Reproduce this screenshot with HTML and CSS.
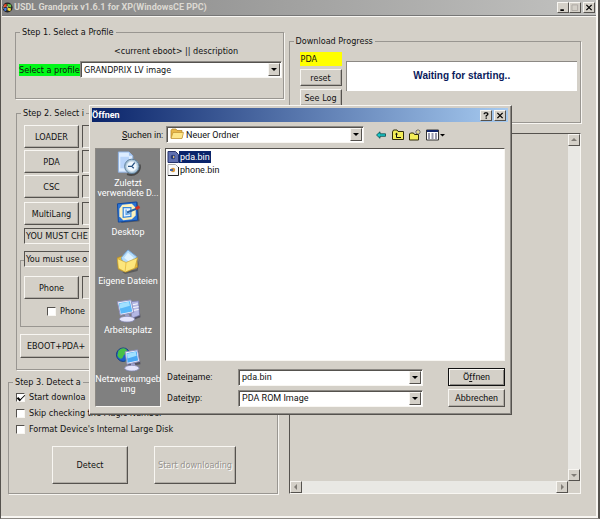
FILE: index.html
```html
<!DOCTYPE html>
<html lang="de">
<head>
<meta charset="utf-8">
<title>USDL Grandprix v1.6.1</title>
<link rel="stylesheet" href="styles.css">
</head>
<body>
<div class="window">
  <header class="titlebar titlebar-inactive">
    <svg class="app-icon" viewBox="0 0 12 12" aria-hidden="true">
      <circle cx="6" cy="6" r="5.5" fill="#222"/>
      <path d="M2 3l3-1v3l-3 1z" fill="#e84a2a"/><path d="M6 2l4 1v3l-4-1z" fill="#6cc04a"/>
      <path d="M2 7l3-1v3l-2 1z" fill="#4a7ce8"/><path d="M6 6l4 1-1 3-3-1z" fill="#f4d83a"/>
      <path d="M1 4l1 1M1 6l1 1M5 5h1v1" stroke="#fff" stroke-width=".8" fill="none"/>
    </svg>
    <h1 class="title">USDL Grandprix v1.6.1 for XP(WindowsCE PPC)</h1>
    <div class="caption-buttons">
      <button class="cap" aria-label="Minimize"><svg viewBox="0 0 8 8"><path d="M1 6h4v2H1z" fill="#000"/></svg></button>
      <button class="cap cap-gap" aria-label="Maximize" disabled><svg viewBox="0 0 8 8"><path d="M.5 1h6.500v6.500H.5z" fill="none" stroke="#aaa6a0"/></svg></button>
      <button class="cap" aria-label="Close"><svg viewBox="0 0 8 8"><path d="M1 1l6 6M7 1L1 7" stroke="#000" stroke-width="1.500"/></svg></button>
    </div>
  </header>

  <main class="content">
    <div class="left">
      <fieldset class="group profile">
        <legend>Step 1. Select a Profile</legend>
        <p class="hint">&lt;current eboot&gt; || description</p>
        <div class="profile-row">
          <label class="green" for="profile">Select a profile</label>
          <span class="combo profile-combo"><select id="profile"><option>GRANDPRIX LV image</option></select><span class="drop"></span></span>
        </div>
      </fieldset>

      <fieldset class="group images">
        <legend>Step 2. Select i</legend>
        <div class="file-row"><button class="btn">LOADER</button><input class="path" aria-label="LOADER"></div>
        <div class="file-row"><button class="btn">PDA</button><input class="path" aria-label="PDA"></div>
        <div class="file-row"><button class="btn">CSC</button><input class="path" aria-label="CSC"></div>
        <div class="file-row lang-row"><button class="btn">MultiLang</button><input class="path" aria-label="MultiLang"></div>
        <p class="note">YOU MUST CHE</p>
        <div class="phone-group">
          <p class="note note-over">You must use o</p>
          <div class="file-row phone-row"><button class="btn">Phone</button><input class="path" aria-label="Phone"></div>
          <label class="check phone-check"><input type="checkbox">Phone</label>
        </div>
        <button class="btn all-btn">EBOOT+PDA+</button>
      </fieldset>

      <fieldset class="group detect">
        <legend>Step 3. Detect a</legend>
        <label class="check"><input type="checkbox" checked>Start downloa</label>
        <label class="check"><input type="checkbox">Skip checking the Magic Number</label>
        <label class="check"><input type="checkbox">Format Device's Internal Large Disk</label>
        <div class="actions">
          <button class="btn big">Detect</button>
          <button class="btn big wide" disabled>Start downloading</button>
        </div>
      </fieldset>
    </div>

    <div class="right">
      <fieldset class="group progress">
        <legend>Download Progress</legend>
        <div class="progress-row">
          <div class="progress-side">
            <span class="yellow">PDA</span>
            <button class="btn small">reset</button>
            <button class="btn small">See Log</button>
          </div>
          <output class="status">Waiting for starting..</output>
        </div>
      </fieldset>
      <section class="log" aria-label="Log">
        <div class="log-text"></div>
        <div class="bar bar-v">
          <button class="scroll" aria-label="Up"><svg viewBox="0 0 8 8"><path d="M1 5l3-3 3 3z" fill="#807c76"/></svg></button>
          <button class="scroll" aria-label="Down"><svg viewBox="0 0 8 8"><path d="M1 3l3 3 3-3z" fill="#807c76"/></svg></button>
        </div>
        <div class="bar bar-h">
          <button class="scroll" aria-label="Left"><svg viewBox="0 0 8 8"><path d="M5 1L2 4l3 3z" fill="#807c76"/></svg></button>
          <button class="scroll" aria-label="Right"><svg viewBox="0 0 8 8"><path d="M3 1l3 3-3 3z" fill="#807c76"/></svg></button>
        </div>
      </section>
    </div>
  </main>

  <section class="dialog" role="dialog" aria-labelledby="dlg-title">
    <header class="titlebar titlebar-active">
      <h2 class="title" id="dlg-title">Öffnen</h2>
      <div class="caption-buttons">
        <button class="cap cap-gap" aria-label="Help"><svg viewBox="0 0 8 8"><path d="M2 2.500V1.700L3 .9h2l1 .9v1.300L4.200 4.300v1" fill="none" stroke="#000" stroke-width="1.400"/><path d="M3.500 6.300h1.500v1.400H3.500z"/></svg></button>
        <button class="cap" aria-label="Close"><svg viewBox="0 0 8 8"><path d="M1 1l6 6M7 1L1 7" stroke="#000" stroke-width="1.500"/></svg></button>
      </div>
    </header>
    <div class="lookin">
      <label for="folder"><u>S</u>uchen in:</label>
      <span class="combo folder-combo">
        <svg class="folder" viewBox="0 0 14 12" aria-hidden="true"><path d="M1 2.500L2 1h4l1 1.500h5V10H1z" fill="#e8b84a" stroke="#b08020" stroke-width=".7"/><path d="M1 10.500L3 4.500h10.500L12 10.500z" fill="#fde68a" stroke="#c09030" stroke-width=".7"/></svg>
        <select id="folder"><option>Neuer Ordner</option></select><span class="drop"></span>
      </span>
      <div class="tools">
        <button class="tool" aria-label="Back"><svg viewBox="0 0 12 12"><path d="M1.500 6L5 2.800v2h5.500v2.500H5v2z" fill="#18c8c8" stroke="#064848" stroke-width=".8"/></svg></button>
        <button class="tool" aria-label="Up one level"><svg viewBox="0 0 12 12"><path d="M.5 3V10.500h11V2.500H6L5 1H1.500z" fill="#f4ee58" stroke="#302c08"/><path d="M3 5.500l1.500-2 1.500 2z" fill="#111"/><path d="M4.500 5v3.500H9" fill="none" stroke="#111"/></svg></button>
        <button class="tool" aria-label="New folder"><svg viewBox="0 0 12 12"><path d="M.5 5v6h9V5.500H5.500L4.500 4h-3z" fill="#f4ee58" stroke="#302c08"/><path d="M9 0v6M6 3h6M7 1l4 4M11 1L7 5" stroke="#3c3828" stroke-width=".6"/><circle cx="9" cy="3" r="1.100" fill="#fff8a0"/></svg></button>
        <button class="tool tool-wide" aria-label="View"><svg viewBox="0 0 19 12"><path d="M.5 1h12v10H.5z" fill="#fff" stroke="#333"/><path d="M1 1h11v2H1z" fill="#10246c"/><path d="M2 5h2M5.500 5h2M9 5h2M2 7h2M5.500 7h2M9 7h2M2 9h2M5.500 9h2M9 9h2" stroke="#34345c" stroke-width="1.200"/><path d="M14 5h5l-2.500 2.500z" fill="#000"/></svg></button>
      </div>
    </div>
    <div class="dialog-body">
      <nav class="places">
        <a href="#" class="place">
          <svg viewBox="0 0 26 26"><path d="M3 1h11l4 4v17H3z" fill="#dcecff" stroke="#8fb2e4"/><path d="M14 1v4h4z" fill="#a4c4f0"/><path d="M5 6h9v12H5z" fill="#b8d4fa"/><path d="M12 24c8 3 15-3 13-10" stroke="#484848" stroke-width="2" fill="none"/><circle cx="17" cy="16" r="7.500" fill="#a8c4d8" stroke="#5c7c98"/><circle cx="17" cy="16" r="5.300" fill="#f0f8fe" stroke="#d0e0ec"/><path d="M17 16l3-4M17 16h-4M17 16l2 2" stroke="#245080" stroke-width="1.300"/></svg>
          <span>Zuletzt<br>verwendete D...</span></a>
        <a href="#" class="place">
          <svg viewBox="0 0 26 26"><path d="M4 4l19-2 2 20-19 2z" fill="#303c50" opacity=".6"/><path d="M2 4l20-2 1 19-20 2z" fill="#2c74d4" stroke="#1048a0"/><path d="M7 5l10-1 4 4v8l-4 4-9 1-4-4V9z" fill="#fff2bc"/><path d="M8 8h8v9l-8 1z" fill="#e4f2ff" stroke="#3888dc" stroke-width="1.300"/><path d="M11 10v5l5-1" fill="none" stroke="#5ca4e8" stroke-width="1.300"/><path d="M12 13l10-4" stroke="#2860a0" stroke-width="2"/><path d="M21 9l4-2" stroke="#d03020" stroke-width="3"/></svg>
          <span>Desktop</span></a>
        <a href="#" class="place">
          <svg viewBox="0 0 26 26"><path d="M7 24l15-3 3-11-2 13-13 3z" fill="#444" opacity=".6"/><path d="M2 9l6-2 14 3 1 9-12 5-8-3z" fill="#e4b83c" stroke="#b48a20" stroke-width=".7"/><path d="M6 9l7-8 9 7-5 9-8 1z" fill="#b4dcfa" stroke="#74a8dc"/><path d="M9 9l4-5 6 5-4 5z" fill="#e0f4ff"/><path d="M2 10l9 4 12-5-3 11-10 4-7-4z" fill="#fce67c" stroke="#c8a030" stroke-width=".7"/><path d="M11 14l-1 9" stroke="#e8c048"/></svg>
          <span>Eigene Dateien</span></a>
        <a href="#" class="place">
          <svg viewBox="0 0 26 26"><path d="M16 4l8-1 2 17-8 3z" fill="#34344c" opacity=".6"/><path d="M15 4l9-1 1 15-8 3z" fill="#b4b8e4" stroke="#7c80b4" stroke-width=".7"/><path d="M18 7l5-1M18 10l6-1M18 13l6-1" stroke="#fff"/><path d="M2 4l14-2 3 13-14 3z" fill="#f0f0fc" stroke="#8c90bc"/><path d="M3.500 5.500l11.500-2 2.500 10.500-12 2.500z" fill="#58b8f8"/><path d="M4 6l10-2 1 4L5 11z" fill="#a0e0ff"/><path d="M10 17h4l1 3h-5z" fill="#a0a4d0"/><ellipse cx="12" cy="22" rx="8" ry="3" fill="#e4e4fa" stroke="#8084b0" stroke-width=".8"/></svg>
          <span>Arbeitsplatz</span></a>
        <a href="#" class="place">
          <svg viewBox="0 0 26 26"><circle cx="8" cy="8" r="7" fill="#2060c8" stroke="#143c80"/><path d="M3 4c4-4 8-3 9 0s-3 3-4 6-4 3-6-1z" fill="#48c048"/><path d="M12 12c3 0 2 3-2 3z" fill="#58cc50"/><path d="M11 6l13-2 2 14-13 2z" fill="#34344c" opacity=".6"/><path d="M10 5l13-2 2 12-13 3z" fill="#f0f0fc" stroke="#8c90bc"/><path d="M11.500 6.500l10.500-2 1.500 9.500-11 2.500z" fill="#48a8f4"/><path d="M12 7l9-2 1 4-9.500 3z" fill="#a0e0ff"/><path d="M16 17h4l1 3h-5z" fill="#a0a4d0"/><ellipse cx="17" cy="22" rx="7.500" ry="3" fill="#e4e4fa" stroke="#8084b0" stroke-width=".8"/></svg>
          <span>Netzwerkumgeb<br>ung</span></a>
      </nav>
      <div class="files">
        <ul class="list">
          <li class="file selected"><svg viewBox="0 0 12 12"><path d="M1 .5h7.500l3 3v8H1z" fill="#6070b0" stroke="#28346c"/><circle cx="6" cy="6" r="2.300" fill="#283c78"/><path d="M6 4.500l2 1.500-2 1.500z" fill="#e0c080"/></svg><span>pda.bin</span></li>
          <li class="file"><svg viewBox="0 0 12 12"><path d="M1 .5h7.500l3 3v8H1z" fill="#fafafa" stroke="#aaa"/><path d="M11.500 3v8.500H1" fill="none" stroke="#222"/><circle cx="6" cy="6" r="2.200" fill="#d89840"/><path d="M3 6h3" stroke="#4868a0" stroke-width="2"/></svg><span>phone.bin</span></li>
        </ul>
        <div class="form">
          <label for="fname">Datei<u>n</u>ame:</label>
          <span class="combo"><input id="fname" value="pda.bin"><span class="drop"></span></span>
          <button class="btn default"><span>Ö<u>f</u>fnen</span></button>
          <label for="ftype">Datei<u>t</u>yp:</label>
          <span class="combo"><select id="ftype"><option>PDA ROM Image</option></select><span class="drop"></span></span>
          <button class="btn">Abbrechen</button>
        </div>
      </div>
    </div>
  </section>
</div>
</body>
</html>
```
FILE: styles.css
```css
* { box-sizing: border-box; }

:root {
  --face: #d4d0c8;
  --light: #f8f6f2;
  --shade: #8c8984;
  --dark: #55524e;
}

body {
  margin: 0;
  background: var(--face);
  font: 9px/12px "DejaVu Sans Condensed", "Open Sans", sans-serif;
  color: #111;
}

h1, h2, p, ul, fieldset { margin: 0; padding: 0; }

button, input, select, output { font: inherit; color: inherit; }

svg { display: block; }

.window {
  position: relative;
  display: flex;
  flex-direction: column;
  min-height: 100vh;
  padding: 0 2px 2px 1px;
  border-left: 1px solid var(--dark);
  border-right: 2px solid var(--dark);
  border-bottom: 1px solid var(--shade);
  box-shadow: inset -2px -2px 0 var(--light);
}

/* Title bars */
.titlebar { display: flex; align-items: center; gap: 1px; }
.titlebar-inactive {
  height: 16px;
  background: linear-gradient(90deg, #828282, #c2c2c0);
  border-bottom: 1px solid #777;
  box-shadow: 0 1px 0 var(--light);
  color: #dcd9d2;
}
.titlebar-active {
  height: 14px;
  padding-right: 1px;
  background: linear-gradient(90deg, #0a246a, #a6caf0);
  color: #fff;
}
.app-icon { width: 11px; height: 11px; }
.title { flex: 1; font: bold 9px/13px Roboto, "Liberation Sans", sans-serif; }
.caption-buttons { display: flex; padding-right: 1px; }
.cap {
  width: 12px;
  height: 11px;
  padding: 1px;
  background: var(--face);
  border: 1px solid;
  border-color: var(--light) var(--dark) var(--dark) var(--light);
}
.cap svg { width: 8px; height: 7px; }
.cap-gap { margin-right: 2px; }

/* Main layout */
.content {
  flex: 1;
  display: grid;
  grid-template-columns: 275fr 293fr;
  gap: 6px;
  padding: 0 15px 22px 6px;
}
.left { display: flex; flex-direction: column; padding-top: 9px; }
.right { display: flex; flex-direction: column; gap: 10px; padding-top: 18px; }

.group {
  min-width: 0;
  border: 1px solid #999691;
  box-shadow: 1px 1px 0 var(--light);
}
.group legend { margin-left: 4px; padding: 0 2px; line-height: 14px; }

.btn {
  padding: 0;
  background: var(--face);
  border: 1px solid;
  border-color: var(--light) var(--dark) var(--dark) var(--light);
  box-shadow: inset -1px -1px 0 #b0aca5;
  text-align: center;
  white-space: nowrap;
}
.btn:disabled { color: #96938e; text-shadow: 1px 1px 0 #fff; }

/* Combo boxes */
.combo {
  display: flex;
  align-items: stretch;
  height: 17px;
  min-width: 0;
  padding: 1px;
  background: #fff;
  border: 1px solid;
  border-color: var(--shade) var(--light) var(--light) var(--shade);
  box-shadow: inset 1px 1px 0 var(--dark);
}
.combo select, .combo input {
  flex: 1;
  min-width: 0;
  padding: 0 2px;
  background: transparent;
  border: 0;
  appearance: none;
}
.drop {
  display: grid;
  place-items: center;
  width: 12px;
  background: var(--face);
  border: 1px solid;
  border-color: var(--light) var(--dark) var(--dark) var(--light);
}
.drop::before {
  content: "";
  border: 3px solid transparent;
  border-top-color: #000;
  border-bottom: 0;
}

/* Profile */
.profile { height: 74px; margin: 0 -1px 0 7px; }
.hint { padding: 6px 0 0 98px; line-height: 13px; }
.profile-row { display: flex; align-items: center; padding: 3px 1px 0 3px; }
.green { width: 61px; background: #00f818; white-space: nowrap; }
.profile-combo { flex: 1; }

/* Images */
.images { height: 264px; margin: 7px 0 0 8px; padding: 5px 0 0 7px; }
.group.images legend, .group.detect legend { margin-left: -3px; }
.file-row { display: flex; gap: 3px; margin-bottom: 2px; }
.file-row .btn { width: 55px; height: 23px; }
.lang-row { margin-top: 4px; }
.path {
  flex: 1;
  min-width: 0;
  background: var(--face);
  border: 1px solid;
  border-color: var(--dark) var(--light) var(--light) var(--dark);
}
.note {
  height: 16px;
  padding-left: 1px;
  line-height: 14px;
  background: var(--face);
  border: 1px solid;
  border-color: var(--dark) var(--light) var(--light) var(--dark);
}
.images > .note { margin-top: 3px; }
.phone-group {
  height: 67px;
  margin: 16px 0 0 -4px;
  padding: 0 0 0 3px;
  border: 1px solid #999691;
}
.note-over { margin-top: -10px; }
.phone-row { margin-top: 9px; }
.all-btn { display: block; width: 120px; height: 24px; margin: 7px 0 0 -4px; padding-left: 6px; text-align: left; }

/* Check boxes */
.check { display: flex; align-items: center; gap: 4px; height: 16px; }
.check input {
  display: grid;
  place-items: center;
  width: 9px;
  height: 9px;
  margin: 0;
  appearance: none;
  background: #fff;
  border: 1px solid;
  border-color: var(--dark) var(--light) var(--light) var(--dark);
}
.check input:checked::before {
  content: "";
  width: 6px;
  height: 3px;
  border: solid #000;
  border-width: 0 0 1px 2px;
  transform: rotate(-45deg);
}
.phone-check { padding: 2px 0 0 23px; height: 18px; }

/* Detect */
.detect { height: 119px; margin-top: 5px; margin-right: 5px; padding-left: 7px; }
.actions { display: flex; gap: 26px; padding: 9px 0 0 36px; }
.big { width: 76px; height: 38px; }
.wide { width: 82px; }

/* Progress */
.progress { height: 89px; }
.progress-row { display: flex; gap: 4px; padding: 4px 3px 0 10px; }
.progress-side { display: flex; flex-direction: column; gap: 3px; width: 42px; }
.yellow { padding-left: 1px; background: #ff0; line-height: 14px; }
.small { height: 17px; }
.status {
  flex: 1;
  height: 30px;
  margin-top: 9px;
  background: #fff;
  border-top: 1px solid var(--shade);
  border-left: 1px solid var(--shade);
  color: #0a1a5c;
  font: bold 10px/28px "Liberation Sans", sans-serif;
  text-align: center;
}

/* Log */
.log {
  flex: 1;
  display: grid;
  grid-template: 1fr 12px / 1fr 12px;
  border: 1px solid;
  border-color: var(--dark) var(--light) var(--light) var(--dark);
}
.bar { display: flex; justify-content: space-between; background: #e9e8e4; }
.bar-v { flex-direction: column; }
.scroll {
  width: 12px;
  height: 12px;
  padding: 1px;
  background: var(--face);
  border: 1px solid;
  border-color: var(--light) var(--dark) var(--dark) var(--light);
}

/* Open dialog */
.dialog {
  position: absolute;
  top: 105px;
  left: 88px;
  width: 423px;
  padding: 2px 3px 7px 2px;
  background: var(--face);
  border: 1px solid;
  border-color: var(--light) var(--dark) var(--dark) var(--light);
  box-shadow: inset -1px -1px 0 var(--shade);
  font: 9px/12px Roboto, "Liberation Sans", sans-serif;
}
.lookin { display: flex; align-items: center; padding: 4px 3px 5px 30px; }
.lookin label { width: 44px; white-space: nowrap; }
.folder-combo { width: 198px; }
.folder { width: 14px; height: 12px; margin-left: 2px; }
.tools { display: flex; gap: 5px; margin-left: 11px; }
.tool { width: 12px; height: 12px; padding: 0; background: none; border: 0; }
.tool-wide { width: 19px; }

.dialog-body { display: grid; grid-template-columns: 66px 1fr; gap: 4px; padding: 0 3px; }
.places {
  background: #808080;
  border: 1px solid;
  border-color: var(--shade) var(--light) var(--light) var(--shade);
}
.place {
  display: flex;
  flex-direction: column;
  align-items: center;
  gap: 2px;
  min-height: 49px;
  padding-top: 2px;
  color: #fff;
  line-height: 10px;
  text-align: center;
  text-decoration: none;
  white-space: nowrap;
}
.place svg { width: 26px; height: 25px; }

.files { display: flex; flex-direction: column; gap: 7px; }
.list {
  height: 213px;
  padding: 1px;
  background: #fff;
  border: 1px solid;
  border-color: var(--dark) var(--light) var(--light) var(--dark);
  list-style: none;
}
.file { display: flex; align-items: center; height: 13px; }
.file svg { width: 12px; height: 12px; }
.file span { padding: 0 1px; }
.selected span { background: #0a246a; color: #fff; }

.form {
  display: grid;
  grid-template-columns: 68px 1fr 57px;
  gap: 3px;
  align-items: center;
  padding-left: 2px;
}
.form .combo { margin-right: 22px; }
.form .btn { height: 18px; }
.form .default { border-color: #111; box-shadow: inset 1px 1px 0 var(--light), inset -1px -1px 0 var(--shade); }
```
